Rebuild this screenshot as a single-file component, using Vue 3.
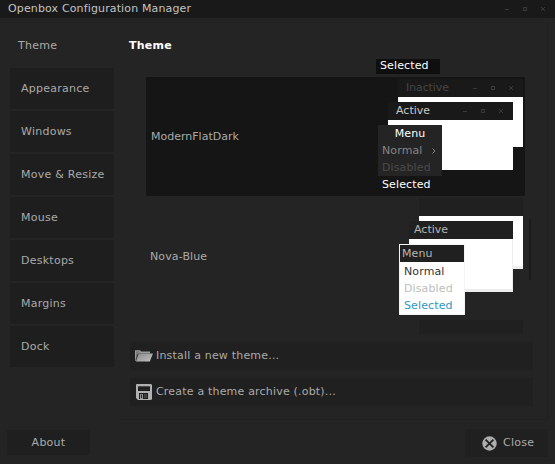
<script setup>
const tabs = ['Appearance', 'Windows', 'Move & Resize', 'Mouse', 'Desktops', 'Margins', 'Dock']
</script>

<template>
  <div class="window">
    <header class="titlebar">
      <span class="t-title">Openbox Configuration Manager</span>
      <svg class="controls" width="40" height="5" viewBox="0 0 40 5" shape-rendering="crispEdges">
        <path class="ctl" d="M0 2h4v1h-4z M18 0h4v4h-4z M19 1v2h2v-2z M36 0h1v1h-1z M39 0h1v1h-1z M37 1h2v2h-2z M36 3h1v1h-1z M39 3h1v1h-1z" fill-rule="evenodd" />
      </svg>
    </header>

    <div class="body">
      <nav class="tabs">
        <div class="tab current"><span class="t-theme">Theme</span></div>
        <div v-for="t in tabs" :key="t" class="tab"><span>{{ t }}</span></div>
      </nav>

      <main class="page">
        <h1><span>Theme</span></h1>
        <div class="list">
          <div class="rows">
            <div class="row selected">
              <span class="name">ModernFlatDark</span>
              <div class="preview">
                <div class="m-top">Selected</div>
                <div class="win dark inactive">
                  <div class="bar"><span>Inactive</span>
                    <svg class="controls" width="40" height="5" viewBox="0 0 40 5" shape-rendering="crispEdges">
                      <path class="ctl" d="M0 2h4v1h-4z M18 0h4v4h-4z M19 1v2h2v-2z M36 0h1v1h-1z M39 0h1v1h-1z M37 1h2v2h-2z M36 3h1v1h-1z M39 3h1v1h-1z" fill-rule="evenodd" />
                    </svg>
                  </div>
                </div>
                <div class="win dark active">
                  <div class="bar"><span>Active</span>
                    <svg class="controls" width="40" height="5" viewBox="0 0 40 5" shape-rendering="crispEdges">
                      <path class="ctl" d="M0 2h4v1h-4z M18 0h4v4h-4z M19 1v2h2v-2z M36 0h1v1h-1z M39 0h1v1h-1z M37 1h2v2h-2z M36 3h1v1h-1z M39 3h1v1h-1z" fill-rule="evenodd" />
                    </svg>
                  </div>
                </div>
                <div class="menu dark-menu">
                  <div class="mt">Menu</div>
                  <div class="mn"><span>Normal</span>
                    <svg width="4" height="6" viewBox="0 0 4 6"><path d="M.5 .5L3 3L.5 5.500" fill="none" stroke="#858585" /></svg>
                  </div>
                  <div class="md">Disabled</div>
                </div>
                <div class="m-sel">Selected</div>
              </div>
            </div>
            <div class="row">
              <span class="name">Nova-Blue</span>
              <div class="preview">
                <div class="win nova back"><div class="bar"></div></div>
                <div class="win nova front"><div class="bar"><span>Active</span></div></div>
                <div class="menu nova-menu">
                  <div class="mt">Menu</div>
                  <div class="mn">Normal</div>
                  <div class="md">Disabled</div>
                  <div class="ms">Selected</div>
                </div>
              </div>
            </div>
            <div class="next"></div>
          </div>
          <div class="scroll"><div class="thumb"></div></div>
        </div>
        <button class="wide">
          <svg width="20" height="14" viewBox="0 0 20 14">
            <defs>
              <linearGradient id="metal" x1="0" y1="0" x2="1" y2="1">
                <stop offset="0" stop-color="#888" /><stop offset="1" stop-color="#c2c2c2" />
              </linearGradient>
            </defs>
            <path d="M1 12V1.200H6L7.200 2.500H16V4.500H4L1.800 12z" fill="#9c9c9c" />
            <path d="M2.100 9V2.400H5.500L6.700 3.500H3.800z" fill="#777" />
            <path d="M3.600 5.200L1.800 11.500" stroke="#303030" stroke-width=".8" />
            <path d="M4.600 4.400H19L15.800 12.600H2z" fill="url(#metal)" />
          </svg>
          <span class="t-install">Install a new theme...</span>
        </button>
        <button class="wide second">
          <svg width="20" height="16" viewBox="0 0 20 16">
            <path fill-rule="evenodd" fill="#b0b0b0" d="M3 0H16Q18 0 18 1V15Q18 16 16 16H4L2 14V1Q2 0 3 0zM4 2V7H16V2zM5 9V15H14V9z" />
            <path d="M4 2H16V3H4z" fill="#4b4b4b" />
            <path d="M6 10H9V15H6z" fill="#929292" />
            <path d="M7 10.500H8V14H7z" fill="#303030" />
            <path d="M10 10h3v4h-3z" fill="#404040" />
          </svg>
          <span class="t-create">Create a theme archive (.obt)...</span>
        </button>
      </main>
    </div>

    <footer>
      <button class="about"><span>About</span></button>
      <button class="close">
        <svg width="15" height="15" viewBox="0 0 15 15">
          <circle cx="7.500" cy="7.500" r="7.200" fill="#acacac" />
          <path d="M3.600 3.600L11.400 11.400M11.400 3.600L3.600 11.400" stroke="#202020" stroke-width="1.800" />
        </svg>
        <span>Close</span>
      </button>
    </footer>
  </div>
</template>

<style>
body { background: #242424; overflow: hidden; }
</style>

<style scoped>
.window {
  box-sizing: border-box;
  width: 555px;
  height: 464px;
  display: flex;
  flex-direction: column;
  background: #242424;
  color: #aaa;
  font: 11px/17px "DejaVu Sans", sans-serif;
  letter-spacing: 0.25px;
  white-space: nowrap;
}
.titlebar {
  flex: none;
  height: 18px;
  box-sizing: border-box;
  padding: 0 10px 0 8px;
  display: flex;
  justify-content: space-between;
  background: #191919;
  color: #c3c3c3;
}
.t-title { letter-spacing: 0.14px; }
.controls { flex: none; margin-top: 7px; }
.ctl { fill: #383838; }
.body {
  flex: none;
  height: 402px;
  box-sizing: border-box;
  margin-right: 7px;
  border-right: 1px solid #212121;
  display: flex;
}
.tabs { width: 116px; padding: 7px 0 0 10px; box-sizing: border-box; }
.tab {
  width: 104px;
  height: 41px;
  box-sizing: border-box;
  margin-bottom: 2px;
  padding: 12px 0 0 11px;
  background: #1e1e1e;
}
.tab.current { background: none; padding-left: 8px; }
.page {
  width: 431px;
  box-sizing: border-box;
  padding: 19px 14px 0 14px;
  border-bottom: 1px solid #212121;
}
h1 { margin: 0 0 0 -1px; font: inherit; font-weight: bold; color: #fff; height: 17px; }
.list {
  display: flex;
  justify-content: space-between;
  height: 275px;
  margin: 5px 0 8px 16px;
  padding-right: 2px;
}
.rows { width: 379px; padding-top: 18px; box-sizing: border-box; }
.row { height: 119px; display: flex; align-items: center; justify-content: space-between; }
.row.selected { background: #151515; margin-bottom: 1px; }
.name { padding-left: 4px; letter-spacing: 0.12px; }
.selected .name { padding-left: 5px; letter-spacing: 0; }
.preview { position: relative; width: 149px; height: 119px; flex: none; }
.next { width: 104px; height: 14px; margin: 4px 2px 0 auto; background: #202020; }
.scroll { width: 2px; padding-top: 160px; box-sizing: border-box; }
.thumb { height: 61px; background: #1a1a1a; }

.m-top, .m-sel, .win, .menu { position: absolute; }
.m-top { left: 0; top: -18px; width: 64px; height: 15px; line-height: 13px; padding-left: 4px; box-sizing: border-box; background: #0f0f0f; color: #fff; letter-spacing: 0.12px; }
.m-sel { left: 6px; top: 99px; color: #fff; letter-spacing: 0.12px; }
.win { background: #fff; box-sizing: border-box; }
.bar { height: 18px; padding: 0 10px 0 8px; display: flex; justify-content: space-between; background: #191919; color: #c8c8c8; letter-spacing: 0; }
.dark { width: 125px; height: 68px; }
.inactive { left: 22px; top: 2px; }
.inactive .bar { color: #454545; letter-spacing: -0.1px; }
.active { left: 12px; top: 25px; }
.menu { line-height: 17px; letter-spacing: 0.12px; }
.dark-menu { left: 2px; top: 48px; width: 64px; height: 51px; background: #242424; color: #858585; }
.dark-menu .mt { text-align: center; color: #fff; }
.dark-menu .mn, .dark-menu .md { padding-left: 4px; }
.mn { display: flex; align-items: center; gap: 9px; }
.dark-menu .md { color: #4b4b4b; }
.nova { width: 104px; border-bottom: 3px solid #eee; }
.nova .bar { background: #202020; color: #b5b5b5; padding-left: 5px; }
.back { left: 43px; top: 1px; height: 71px; }
.front { left: 33px; top: 24px; height: 71px; border-right: 1px solid #eee; }
.front .bar { margin-right: -1px; }
.nova-menu { left: 23px; top: 47px; width: 66px; height: 71px; box-sizing: border-box; border: 1px solid #f4f4f4; background: #fff; color: #333; }
.nova-menu .mt { background: #202020; color: #b5b5b5; padding-left: 2px; margin-bottom: 1px; }
.nova-menu .mn, .nova-menu .md, .nova-menu .ms { padding-left: 4px; }
.nova-menu .md { color: #bdbdbd; }
.nova-menu .ms { color: #2b98c7; }

button { margin: 0; border: 0; border-radius: 0; color: inherit; font: inherit; letter-spacing: inherit; display: flex; align-items: center; box-sizing: border-box; }
svg { flex: none; }
.wide { width: 403px; height: 28px; padding: 0 0 0 4px; gap: 2px; background: #202020; letter-spacing: 0.19px; }
.wide span { padding-bottom: 2px; }
.second { margin-top: 8px; }
footer { display: flex; justify-content: space-between; padding: 9px 7px 0; }
.about { width: 83px; height: 25px; margin-top: 1px; justify-content: center; background: #1f1f1f; }
.close { width: 83px; height: 28px; padding: 0 0 0 17px; gap: 6px; background: #202020; }
.close span { padding-bottom: 2px; }
</style>
